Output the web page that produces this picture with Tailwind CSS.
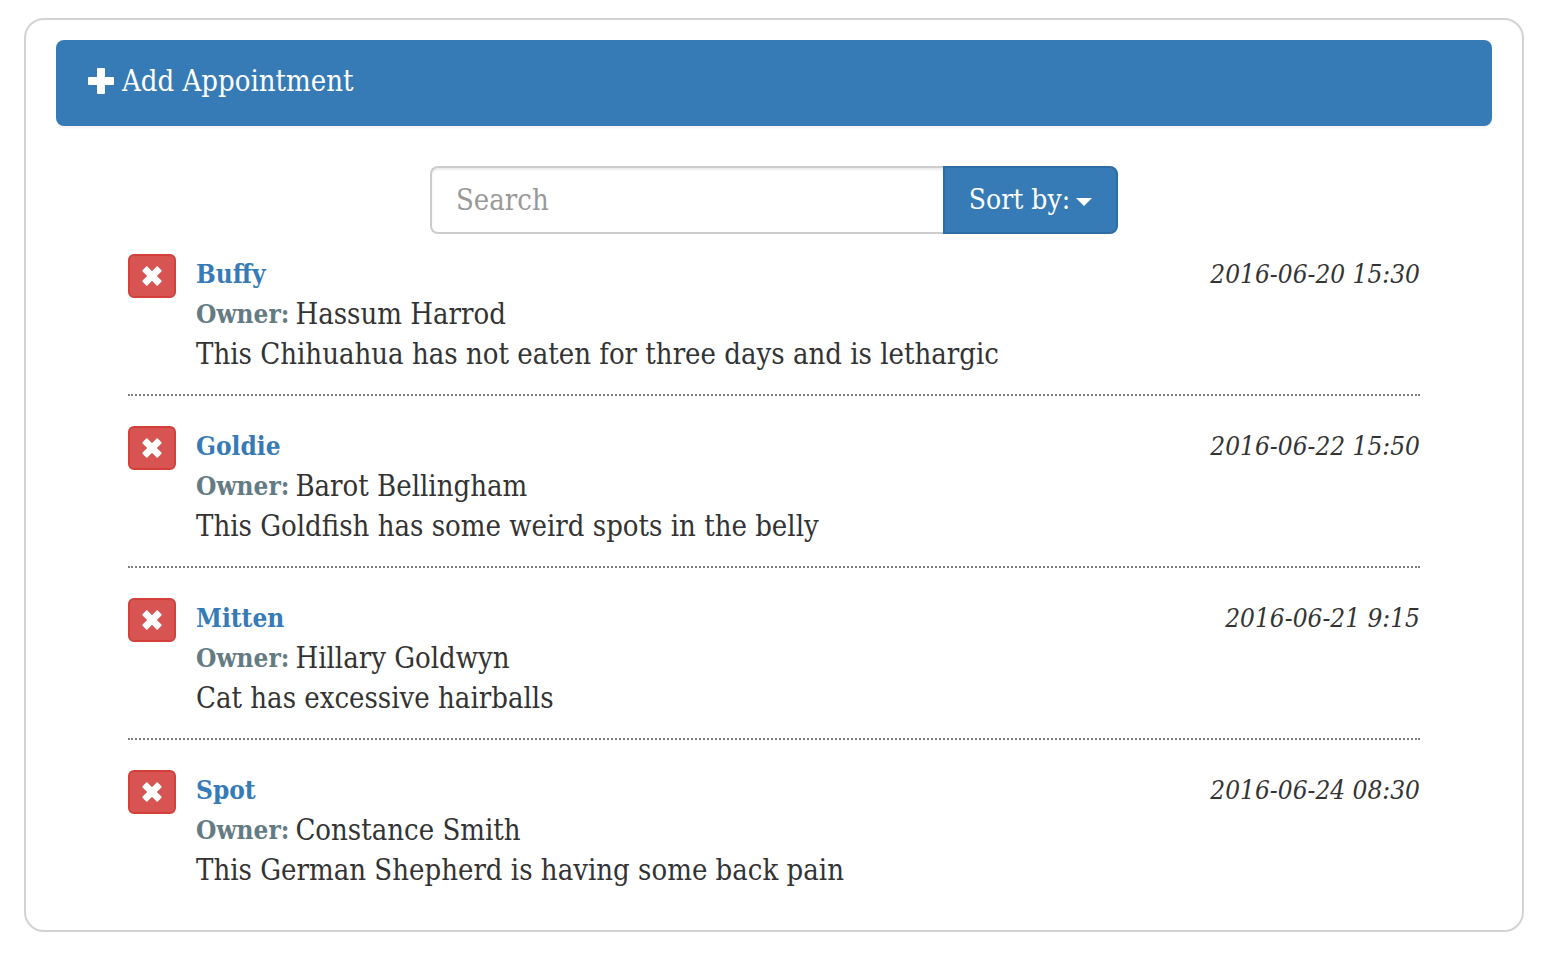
<!DOCTYPE html>
<html lang="en">
<head>
<meta charset="utf-8">
<meta name="viewport" content="width=device-width, initial-scale=1">
<title>Appointments</title>
<script src="https://cdn.jsdelivr.net/npm/@tailwindcss/browser@4"></script>
</head>
<body class="bg-white font-['Roboto_Slab','DejaVu_Serif_Condensed','DejaVu_Serif',serif] text-[29px] leading-10 text-[#333333]">
<svg class="hidden" aria-hidden="true">
  <symbol id="cross" viewBox="0 0 20 20"><path fill="currentColor" d="M5.400.6 10 5.200 14.600.6q.6-.6 1.200 0l3.600 3.600q.6.6 0 1.200L14.800 10l4.600 4.600q.6.6 0 1.200l-3.600 3.600q-.6.6-1.200 0L10 14.800l-4.600 4.600q-.6.6-1.200 0L.6 15.800q-.6-.6 0-1.200L5.200 10 .6 5.400q-.6-.6 0-1.200L4.200.6q.6-.6 1.200 0z"/></symbol>
</svg>
<main class="mt-[18px] mr-9 mb-5 ml-6 rounded-[20px] border-2 border-[#d3d3d3] px-[30px] pt-5 pb-10">
  <button type="button" class="flex w-full items-center gap-2 rounded-lg bg-[#367bb5] px-8 pt-[21px] pb-[25px] text-left text-white shadow-[0_2px_2px_rgba(0,0,0,0.05)]">
    <svg class="size-[26px]" viewBox="0 0 26 26" aria-hidden="true"><path fill="currentColor" d="M10 0h6q1 0 1 1v8h8q1 0 1 1v6q0 1-1 1h-8v8q0 1-1 1h-6q-1 0-1-1v-8H1q-1 0-1-1v-6q0-1 1-1h8V1q0-1 1-1z"/></svg>
    <span>Add Appointment</span>
  </button>

  <form class="mx-auto mt-10 flex h-[68px] w-full max-w-[688px]">
    <input type="text" aria-label="Search" placeholder="Search" class="min-w-0 flex-1 rounded-l-lg border-2 border-r-0 border-[#cccccc] px-6 shadow-[inset_0_2px_2px_rgba(0,0,0,0.075)] outline-none placeholder:text-[#999999]">
    <button type="button" aria-haspopup="true" class="flex w-[175px] items-center justify-center gap-1.5 rounded-r-lg border-2 border-[#2e6da4] bg-[#367bb5] text-[28px] font-medium whitespace-nowrap text-white">
      Sort by:
      <svg class="mt-1 h-2 w-4" viewBox="0 0 16 8" aria-hidden="true"><path fill="currentColor" d="M0 0h16L8 8z"/></svg>
    </button>
  </form>

  <ul class="mx-[72px] mt-5 space-y-[30px]">
    <li class="flex items-start gap-5 border-b-2 border-dotted border-[#808080] pb-5">
      <button type="button" aria-label="Delete Buffy" class="flex h-11 w-12 items-center justify-center rounded-md border-2 border-[#d43f3a] bg-[#d75452] text-white"><svg class="size-5"><use href="#cross"/></svg></button>
      <div class="min-w-0 flex-1">
        <div class="flex justify-between text-[26px] leading-10"><h2 class="font-bold text-[#367bb5]">Buffy</h2><time class="italic">2016-06-20 15:30</time></div>
        <p class="flex gap-1.5"><b class="text-[26px] text-[#657b83]">Owner:</b> Hassum Harrod</p>
        <p>This Chihuahua has not eaten for three days and is lethargic</p>
      </div>
    </li>
    <li class="flex items-start gap-5 border-b-2 border-dotted border-[#808080] pb-5">
      <button type="button" aria-label="Delete Goldie" class="flex h-11 w-12 items-center justify-center rounded-md border-2 border-[#d43f3a] bg-[#d75452] text-white"><svg class="size-5"><use href="#cross"/></svg></button>
      <div class="min-w-0 flex-1">
        <div class="flex justify-between text-[26px] leading-10"><h2 class="font-bold text-[#367bb5]">Goldie</h2><time class="italic">2016-06-22 15:50</time></div>
        <p class="flex gap-1.5"><b class="text-[26px] text-[#657b83]">Owner:</b> Barot Bellingham</p>
        <p>This Goldfish has some weird spots in the belly</p>
      </div>
    </li>
    <li class="flex items-start gap-5 border-b-2 border-dotted border-[#808080] pb-5">
      <button type="button" aria-label="Delete Mitten" class="flex h-11 w-12 items-center justify-center rounded-md border-2 border-[#d43f3a] bg-[#d75452] text-white"><svg class="size-5"><use href="#cross"/></svg></button>
      <div class="min-w-0 flex-1">
        <div class="flex justify-between text-[26px] leading-10"><h2 class="font-bold text-[#367bb5]">Mitten</h2><time class="italic">2016-06-21 9:15</time></div>
        <p class="flex gap-1.5"><b class="text-[26px] text-[#657b83]">Owner:</b> Hillary Goldwyn</p>
        <p>Cat has excessive hairballs</p>
      </div>
    </li>
    <li class="flex items-start gap-5">
      <button type="button" aria-label="Delete Spot" class="flex h-11 w-12 items-center justify-center rounded-md border-2 border-[#d43f3a] bg-[#d75452] text-white"><svg class="size-5"><use href="#cross"/></svg></button>
      <div class="min-w-0 flex-1">
        <div class="flex justify-between text-[26px] leading-10"><h2 class="font-bold text-[#367bb5]">Spot</h2><time class="italic">2016-06-24 08:30</time></div>
        <p class="flex gap-1.5"><b class="text-[26px] text-[#657b83]">Owner:</b> Constance Smith</p>
        <p>This German Shepherd is having some back pain</p>
      </div>
    </li>
  </ul>
</main>
</body>
</html>
